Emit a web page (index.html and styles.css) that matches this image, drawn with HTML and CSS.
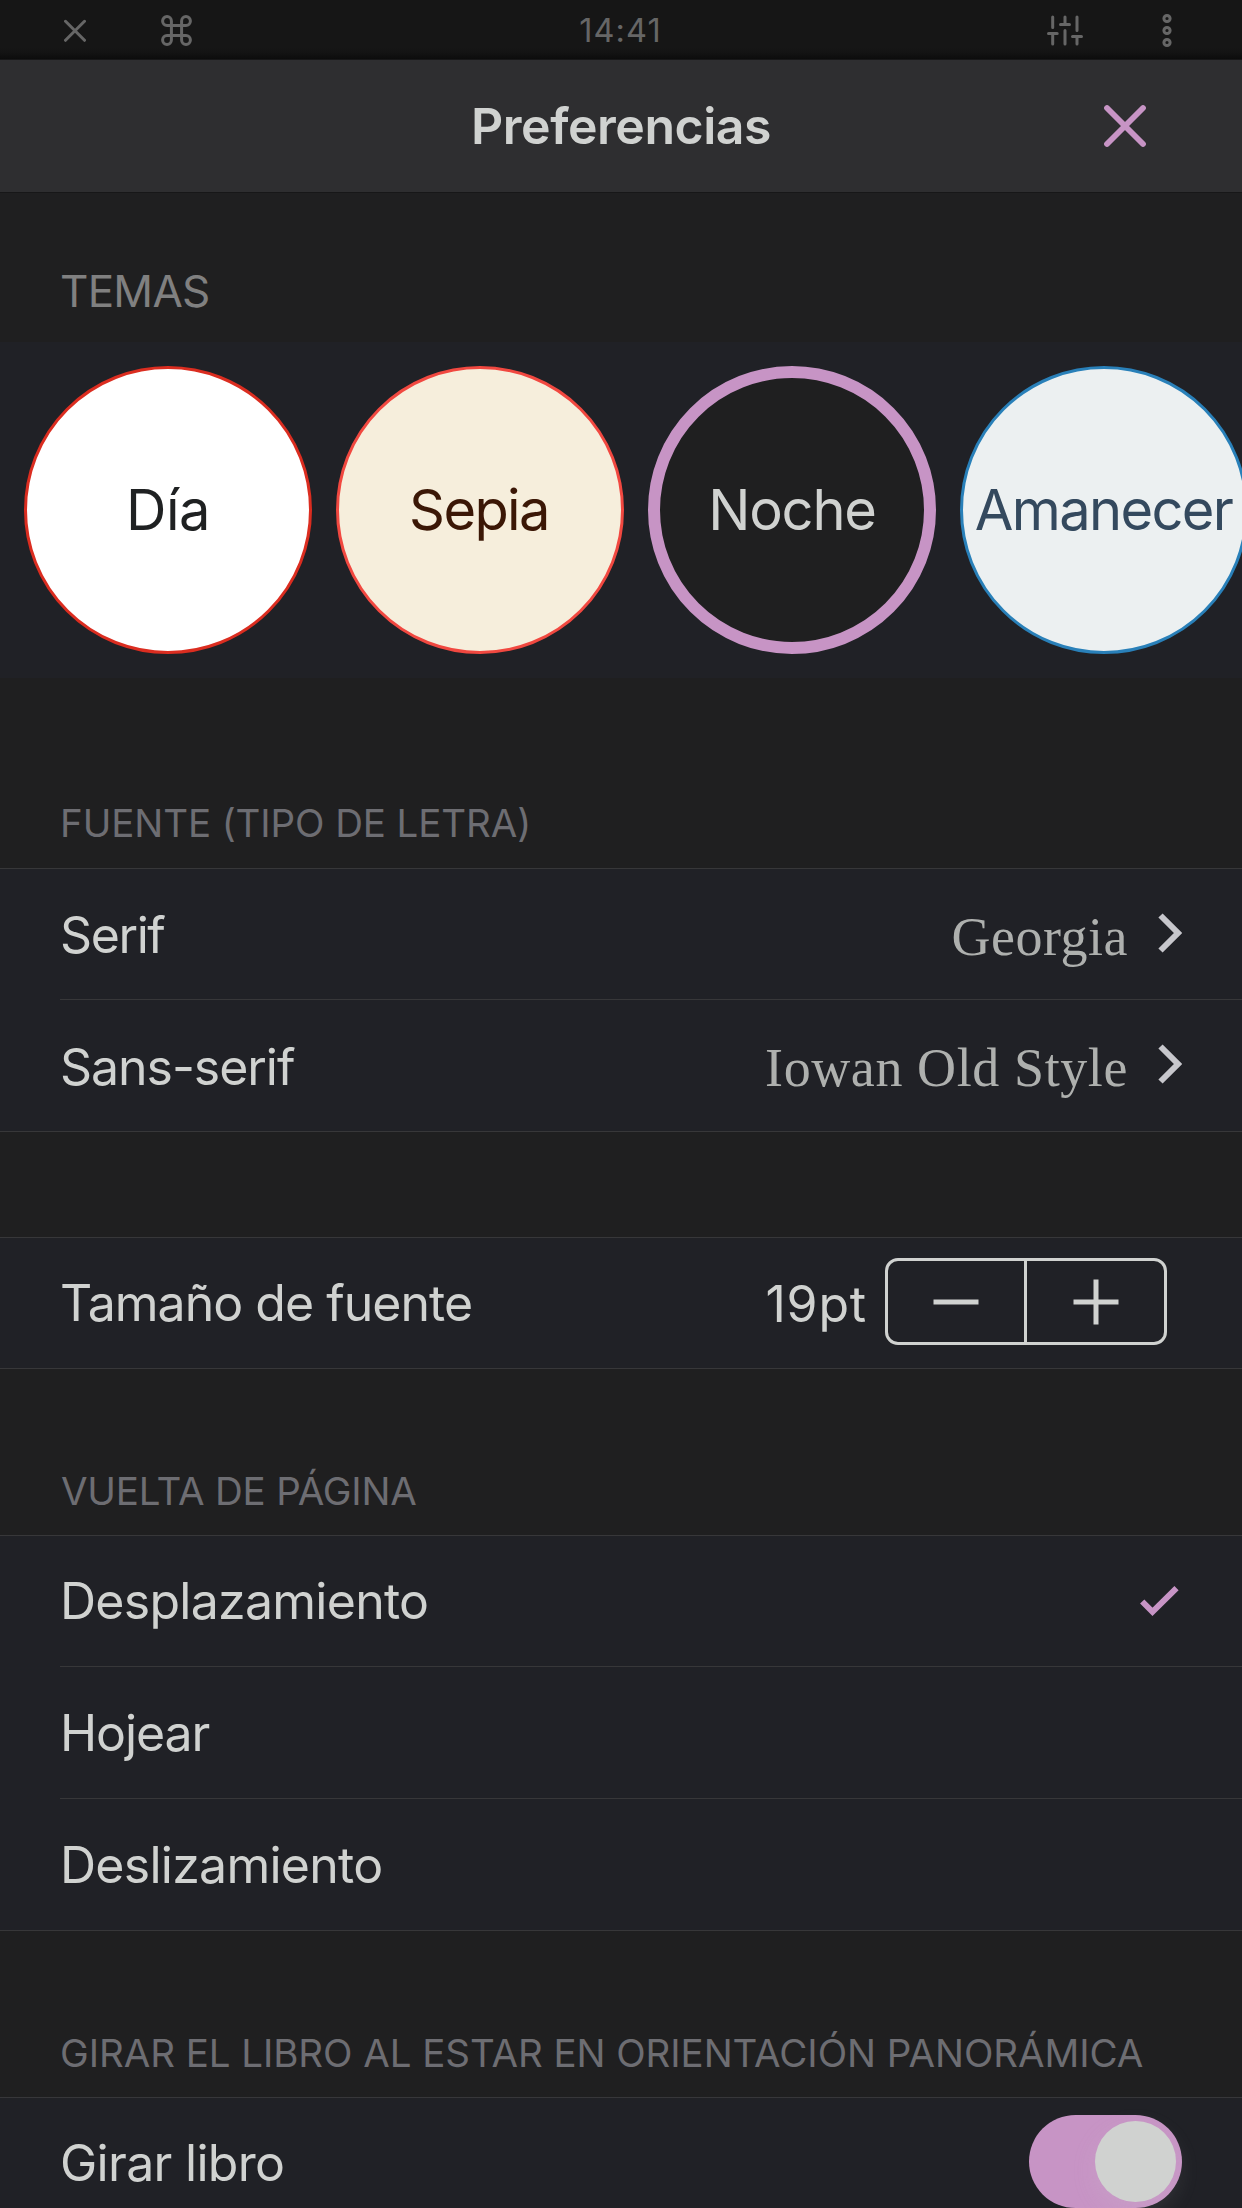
FILE: index.html
```html
<!DOCTYPE html>
<html lang="es">
<head>
<meta charset="utf-8">
<title>Preferencias</title>
<link rel="stylesheet" href="styles.css">
</head>
<body>
<div class="status">
  <div class="status-side">
    <svg width="22" height="60" viewBox="0 0 22 60"><path d="M1.5 21.3l19 19M20.500 21.300l-19 19"/></svg>
    <svg class="command" width="31" height="31" viewBox="0 0 31 31"><path d="M10.400 10.400V6a4.400 4.400 0 1 0-4.400 4.400H25a4.400 4.400 0 1 0-4.400-4.400V25a4.400 4.400 0 1 0 4.400-4.400H6a4.400 4.400 0 1 0 4.400 4.400z"/></svg>
  </div>
  <time class="clock">14:41</time>
  <div class="status-side status-end">
    <svg width="36" height="60" viewBox="0 0 36 60"><path d="M5.700 17v10.500M1.500 33.500h8.700M5.700 33.500v10.500M18 17v7.500M13.500 24.500h9M18 30.500v13.500M30 17v13.500M25.500 36.500h9M30 36.500v7.500"/></svg>
    <svg class="dots" width="10" height="60" viewBox="0 0 10 60"><circle cx="5" cy="18.500" r="3.100"/><circle cx="5" cy="30.500" r="3.100"/><circle cx="5" cy="42.500" r="3.100"/></svg>
  </div>
</div>

<header class="navbar">
  <h1 class="title">Preferencias</h1>
  <svg class="close" width="44" height="44" viewBox="0 0 44 44"><path d="M4 4l36 36M40 4l-36 36"/></svg>
</header>

<main>
  <h2 class="themes-heading">TEMAS</h2>
  <div class="themes">
    <div class="theme day">Día</div>
    <div class="theme sepia">Sepia</div>
    <div class="theme night">Noche</div>
    <div class="theme dawn">Amanecer</div>
  </div>

  <h2 class="heading heading-fonts">FUENTE (TIPO DE LETRA)</h2>
  <section class="group">
    <div class="row font-row">
      <span class="label serif-label">Serif</span>
      <span class="value">Georgia</span>
      <svg class="chevron" width="24" height="40" viewBox="0 0 24 40"><path d="M2.500 2.500L20 20L2.500 37.500"/></svg>
    </div>
    <div class="row font-row">
      <span class="label sans-label">Sans-serif</span>
      <span class="value value-wide">Iowan Old Style</span>
      <svg class="chevron" width="24" height="40" viewBox="0 0 24 40"><path d="M2.500 2.500L20 20L2.500 37.500"/></svg>
    </div>
  </section>

  <section class="group group-size">
    <div class="row size-row">
      <span class="label size-label">Tamaño de fuente</span>
      <span class="size">19pt</span>
      <div class="stepper">
        <div class="step"><svg width="46" height="46" viewBox="0 0 46 46"><path d="M0.500 23h45"/></svg></div>
        <div class="step"><svg width="46" height="46" viewBox="0 0 46 46"><path d="M0.500 23h45M23 .5v45"/></svg></div>
      </div>
    </div>
  </section>

  <h2 class="heading heading-paging">VUELTA DE PÁGINA</h2>
  <section class="group">
    <div class="row">
      <span class="label">Desplazamiento</span>
      <svg class="check" width="40" height="32" viewBox="0 0 40 32"><path d="M2.200 15.500L12.500 25.800L36.500 2.200"/></svg>
    </div>
    <div class="row"><span class="label hojear-label">Hojear</span></div>
    <div class="row"><span class="label">Deslizamiento</span></div>
  </section>

  <h2 class="heading heading-rotate">GIRAR EL LIBRO AL ESTAR EN ORIENTACIÓN PANORÁMICA</h2>
  <section class="group">
    <div class="row rotate-row">
      <span class="label rotate-label">Girar libro</span>
      <div class="toggle"><div class="knob"></div></div>
    </div>
  </section>
</main>
</body>
</html>
```
FILE: styles.css
```css
* { box-sizing: border-box; }

html, body { height: 2208px; overflow: hidden; }

body {
  margin: 0;
  background: #1f1f20;
  color: #d0d2d0;
  font-family: "Inter", "Liberation Sans", sans-serif;
  font-weight: 400;
}

h1, h2 { margin: 0; font-weight: 400; }

svg { display: block; flex: none; fill: none; stroke: currentColor; }

/* Dimmed reader toolbar behind the sheet */
.status {
  display: grid;
  grid-template-columns: 1fr auto 1fr;
  align-items: center;
  height: 60px;
  padding: 0 70px 0 64px;
  background: linear-gradient(#161616 0 48px, #131313 53px, #0c0c0c 59px, #171718 59px);
  color: #666;
  stroke-width: 3;
  stroke-linecap: round;
}
.status-side { display: flex; align-items: center; gap: 75px; }
.status-end { justify-content: flex-end; gap: 79px; }
.command { margin-top: 1px; }
.clock { font-size: 32.5px; line-height: 59px; letter-spacing: 1.1px; margin-left: 5px; }

.navbar {
  display: grid;
  grid-template-columns: 1fr auto 1fr;
  align-items: center;
  height: 133px;
  padding: 0 95px;
  background: #2e2e30;
  border-bottom: 1px solid #171718;
}
.title {
  grid-column: 2;
  font-size: 50px;
  font-weight: 600;
  line-height: 60px;
  letter-spacing: -0.47px;
}
.close { justify-self: end; color: #c794c5; stroke-width: 5.8; stroke-linecap: round; }

.themes-heading {
  height: 149px;
  padding: 72px 60px 0;
  font-size: 44px;
  line-height: 52px;
  letter-spacing: -0.74px;
  color: #808080;
}
.themes {
  display: flex;
  gap: 24px;
  height: 336px;
  padding: 24px;
  background: #202126;
  overflow: hidden;
}
.theme {
  display: flex;
  align-items: center;
  justify-content: center;
  flex: none;
  width: 288px;
  height: 288px;
  border: 3px solid;
  border-radius: 50%;
  font-size: 56px;
  white-space: nowrap;
}
.day { background: #fff; border-color: #db2d20; color: #1f2122; letter-spacing: -0.5px; }
.sepia { padding-right: 2px; background: #f6eedc; border-color: #f14840; color: #3b1706; letter-spacing: -1.6px; }
.night { background: #1f1f20; border: 12px solid #c794c5; color: #d0d2d0; letter-spacing: -1.2px; }
.dawn { padding-right: 1px; background: #ecf0f1; border-color: #2980b9; color: #34495e; letter-spacing: -1.64px; }

.heading {
  display: flex;
  align-items: flex-end;
  height: 166px;
  padding: 0 60px 21px;
  font-size: 38.5px;
  line-height: 46px;
  white-space: nowrap;
  color: #6d6d72;
}
.heading-fonts { height: 190px; padding-bottom: 22px; letter-spacing: -0.1px; }
.heading-paging { padding-left: 61px; letter-spacing: -0.2px; }
.heading-rotate { letter-spacing: -0.06px; }

.group {
  padding-left: 60px;
  background: #202126;
  border: solid #373739;
  border-width: 1px 0;
}
.group-size { margin-top: 105px; }

.row {
  display: flex;
  align-items: center;
  height: 130px;
  padding-right: 60px;
}
.row + .row { height: 132px; border-top: 1px solid #373739; }
.label {
  margin-right: auto;
  font-size: 50px;
  line-height: 60px;
  letter-spacing: -0.73px;
}
.font-row .label { padding-top: 2px; }
.serif-label { letter-spacing: -1.4px; }
.sans-label { letter-spacing: -1.05px; }
.size-label { letter-spacing: -0.98px; }
.hojear-label { letter-spacing: -1.1px; }
.rotate-label { padding-top: 1px; letter-spacing: -0.7px; }

.value {
  padding-top: 5px;
  font-family: "Liberation Serif", serif;
  font-size: 54px;
  line-height: 60px;
  letter-spacing: 0.5px;
  color: #aeb0ae;
}
.value-wide { letter-spacing: 0.6px; }
.chevron { margin: 0 0 3px 30px; color: #c7c7cc; stroke-width: 6; }

.size-row { padding-right: 75px; }
.size { margin-right: 18px; padding-top: 2px; font-size: 50px; line-height: 60px; letter-spacing: 0.8px; }
.stepper {
  display: grid;
  grid-template-columns: 136px 140px;
  width: 282px;
  height: 87px;
  margin-bottom: 3px;
  border: 3px solid;
  border-radius: 13px;
  stroke-width: 5;
}
.step { display: flex; align-items: center; justify-content: center; }
.step + .step { border-left: 3px solid; }

.check { margin: 2px 2px 0 0; color: #c794c5; stroke-width: 6; }

.toggle {
  display: flex;
  justify-content: flex-end;
  width: 153px;
  height: 93px;
  margin-bottom: 1px;
  padding: 6px;
  border-radius: 47px;
  background: #c794c5;
}
.knob {
  width: 81px;
  height: 81px;
  border-radius: 50%;
  background: #d0d2d0;
  box-shadow: 0 9px 24px rgba(208, 210, 208, 0.15);
}
.rotate-row { margin-top: -1px; }
```
